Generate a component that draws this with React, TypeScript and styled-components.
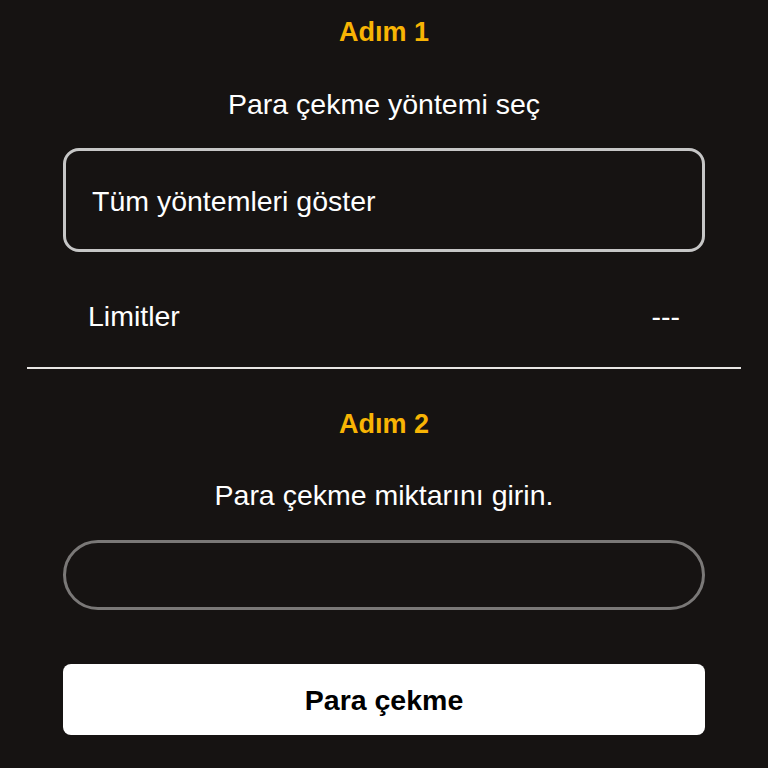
import styled, { createGlobalStyle } from "styled-components";

interface StepTitleProps {
  $top?: number;
};
interface SubtitleProps {
  $top?: number;
};

const GlobalStyle = createGlobalStyle`
  body {
    margin: 0;
    background-color: #161312;
    font-family: "Liberation Sans", Arial, Helvetica, sans-serif;
    color: #ffffff;
  }
`;

const Page = styled.div`
  width: 768px;
  min-height: 768px;
  display: flex;
  flex-direction: column;
  background-color: #161312;
`;
const Section = styled.div`
  display: flex;
  flex-direction: column;
  padding: 0 63px;
`;
const StepTitle = styled.h3`
  margin: ${(props: StepTitleProps) => props.$top ?? 15}px 0 0 0;
  font-size: 27px;
  line-height: 34px;
  font-weight: 700;
  text-align: center;
  color: #f8b404;
`;
const Subtitle = styled.p`
  margin: ${(props: SubtitleProps) => props.$top ?? 38}px 0 0 0;
  font-size: 28.5px;
  line-height: 34px;
  text-align: center;
  color: #ffffff;
`;
const MethodSelect = styled.div`
  margin-top: 27px;
  height: 104px;
  box-sizing: border-box;
  border: 3px solid #c6c6c6;
  border-radius: 16px;
  padding: 2px 26px 0 26px;
  display: flex;
  align-items: center;
  font-size: 28.5px;
  color: #ffffff;
  cursor: pointer;
`;
const LimitsRow = styled.div`
  margin-top: 47px;
  padding: 0 25px;
  display: flex;
  justify-content: space-between;
  align-items: center;
  font-size: 28.5px;
  line-height: 34px;
`;
const Divider = styled.hr`
  margin: 34px 27px 0 27px;
  border: none;
  height: 2px;
  background-color: #e8e6e4;
`;
const AmountInput = styled.input`
  margin-top: 28px;
  height: 70px;
  box-sizing: border-box;
  border: 3px solid #7a7877;
  border-radius: 35px;
  background: transparent;
  padding: 0 28px;
  font-family: inherit;
  font-size: 28px;
  color: #ffffff;
  outline: none;
`;
const SubmitButton = styled.button`
  margin: 54px 0 33px 0;
  height: 71px;
  border: none;
  border-radius: 8px;
  background-color: #ffffff;
  padding-top: 3px;
  font-family: inherit;
  font-size: 28.5px;
  font-weight: 700;
  color: #000000;
  cursor: pointer;
`;

export default function App() {
  return (
    <>
      <GlobalStyle />
      <Page>
        <Section>
          <StepTitle>Adım 1</StepTitle>
          <Subtitle>Para çekme yöntemi seç</Subtitle>
          <MethodSelect>Tüm yöntemleri göster</MethodSelect>
          <LimitsRow>
            <span>Limitler</span>
            <span>---</span>
          </LimitsRow>
        </Section>
        <Divider />
        <Section>
          <StepTitle $top={38}>Adım 2</StepTitle>
          <Subtitle $top={37}>Para çekme miktarını girin.</Subtitle>
          <AmountInput type="text" />
          <SubmitButton>Para çekme</SubmitButton>
        </Section>
      </Page>
    </>
  );
}
